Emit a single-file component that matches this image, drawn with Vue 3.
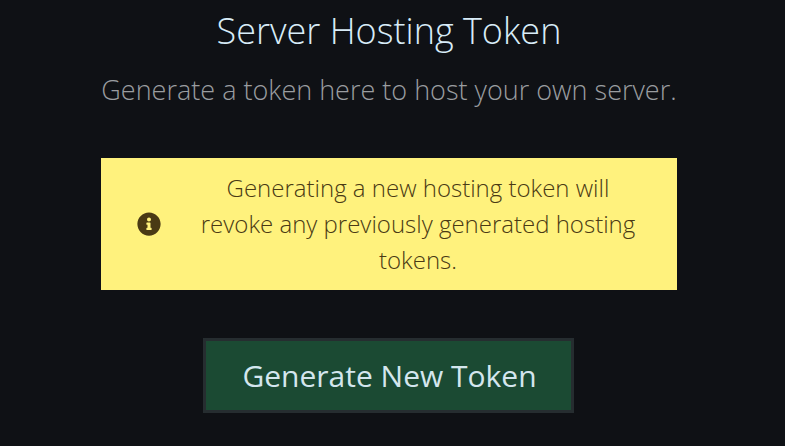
<template>
  <main class="page">
    <section class="panel">
      <h1 class="title">Server Hosting Token</h1>
      <p class="subtitle">Generate a token here to host your own server.</p>
      <div class="notice">
        <svg class="icon" viewBox="0 0 512 512" aria-hidden="true">
          <path fill="currentColor" d="M256 8C119 8 8 119 8 256s111 248 248 248 248-111 248-248S393 8 256 8zm0 110c23.200 0 42 18.800 42 42s-18.800 42-42 42-42-18.800-42-42 18.800-42 42-42zm56 254c0 6.600-5.400 12-12 12h-88c-6.600 0-12-5.400-12-12v-24c0-6.600 5.400-12 12-12h12v-64h-12c-6.600 0-12-5.400-12-12v-24c0-6.600 5.400-12 12-12h64c6.600 0 12 5.400 12 12v100h12c6.600 0 12 5.400 12 12v24z" />
        </svg>
        <p class="notice-text">Generating a new hosting token will revoke any previously generated hosting tokens.</p>
      </div>
      <button class="action" type="button">Generate New Token</button>
    </section>
  </main>
</template>

<script setup>
</script>

<style>
html, body { margin: 0; background: #0f1115; }
</style>

<style scoped>
.page {
  width: 778px;
  height: 446px;
  overflow: hidden;
  display: flex;
  justify-content: center;
  font-family: "Open Sans", "Liberation Sans", sans-serif;
}
.panel {
  width: 576px;
  display: flex;
  flex-direction: column;
  align-items: center;
  padding-top: 6px;
}
.title {
  margin: 0;
  font-size: 36px;
  line-height: 49px;
  font-weight: 300;
  color: #d8ecf8;
  white-space: nowrap;
}
.subtitle {
  margin: 17px 0 0;
  font-size: 27px;
  line-height: 35px;
  font-weight: 300;
  color: #9a9da0;
  white-space: nowrap;
}
.notice {
  margin-top: 51px;
  width: 100%;
  height: 132px;
  box-sizing: border-box;
  padding: 0 35px 0 36px;
  display: flex;
  align-items: center;
  gap: 33px;
  background: #fff27d;
  color: #4a3a14;
}
.icon {
  width: 24px;
  height: 24px;
  flex: none;
}
.notice-text {
  margin: 0;
  flex: 1;
  font-size: 24px;
  line-height: 36px;
  font-weight: 300;
  text-align: center;
}
.action {
  margin-top: 48px;
  margin-right: 1px;
  width: 371px;
  height: 75px;
  box-sizing: border-box;
  border: 3px solid #262d30;
  border-radius: 0;
  background: #1b4a33;
  color: #d4e6ee;
  font-family: inherit;
  font-size: 30px;
  font-weight: 400;
  padding: 0 0 0 2px;
}
</style>
